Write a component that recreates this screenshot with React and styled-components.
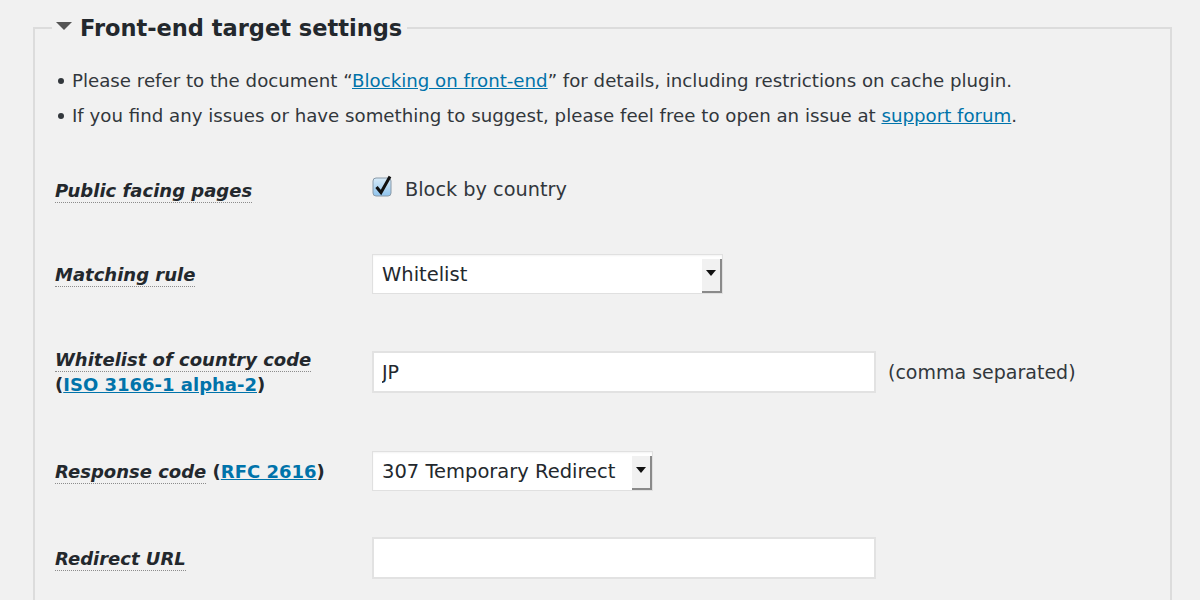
import React from "react";
import styled, { createGlobalStyle } from "styled-components";

const GlobalStyle = createGlobalStyle`
  html, body {
    margin: 0;
    background: #f1f1f1;
  }
  body {
    font-family: "DejaVu Sans", "Liberation Sans", sans-serif;
    color: #32373c;
  }
`;

const rows = [
  { key: "public", h: 80 },
  { key: "rule", h: 88 },
  { key: "whitelist", h: 108 },
  { key: "code", h: 90 },
  { key: "redirect", h: 84 }
];

const Caret = () => (
  <svg width="16" height="8" viewBox="0 0 16 8">
    <path d="M0 0 L16 0 L8 8 Z" fill="#555" />
  </svg>
);

const CheckMark = () => (
  <svg width="21" height="22" viewBox="0 0 21 22">
    <defs>
      <linearGradient id="cb" x1="0" y1="0" x2="0" y2="1">
        <stop offset="0" stopColor="#d7ebf9" />
        <stop offset="1" stopColor="#8fc3ec" />
      </linearGradient>
    </defs>
    <rect x="1" y="3" width="18" height="18" rx="3" fill="url(#cb)" stroke="#8a9aa8" />
    <path d="M4.5 12 L9 17.5 L18 1.5" fill="none" stroke="#111" strokeWidth="3" strokeLinejoin="miter" />
  </svg>
);

const SelectBox = ({ width, children }) => (
  <Select width={width}>
    <SelectValue>{children}</SelectValue>
    <SelectArrow>
      <svg width="10" height="6" viewBox="0 0 10 6">
        <path d="M0 0 L10 0 L5 6 Z" fill="#111" />
      </svg>
    </SelectArrow>
  </Select>
);

export default function App() {
  const heights = Object.fromEntries(rows.map(r => [r.key, r.h]));
  return (
    <>
      <GlobalStyle />
      <Page>
        <Fieldset>
          <Legend>
            <Caret />
            Front-end target settings
          </Legend>
          <Notes>
            <li>
              Please refer to the document “<Link href="#">Blocking on front-end</Link>” for details,
              including restrictions on cache plugin.
            </li>
            <li>
              If you find any issues or have something to suggest, please feel free to open an
              issue at <Link href="#">support forum</Link>.
            </li>
          </Notes>

          <Row h={heights.public}>
            <Label>
              <Term>Public facing pages</Term>
            </Label>
            <Field>
              <CheckLabel>
                <CheckMark />
                Block by country
              </CheckLabel>
            </Field>
          </Row>

          <Row h={heights.rule}>
            <Label>
              <Term>Matching rule</Term>
            </Label>
            <Field>
              <SelectBox width={351}>Whitelist</SelectBox>
            </Field>
          </Row>

          <Row h={heights.whitelist}>
            <Label>
              <Term>Whitelist of country code</Term>
              <br />
              (<BoldLink href="#">ISO 3166-1 alpha-2</BoldLink>)
            </Label>
            <Field>
              <TextInput defaultValue="JP" />
              <Hint>(comma separated)</Hint>
            </Field>
          </Row>

          <Row h={heights.code}>
            <Label>
              <Term>Response code</Term> (<BoldLink href="#">RFC 2616</BoldLink>)
            </Label>
            <Field>
              <SelectBox width={281}>307 Temporary Redirect</SelectBox>
            </Field>
          </Row>

          <Row h={heights.redirect}>
            <Label>
              <Term>Redirect URL</Term>
            </Label>
            <Field>
              <TextInput defaultValue="" />
            </Field>
          </Row>
        </Fieldset>
      </Page>
    </>
  );
}

const Page = styled.div`
  padding: 11px 28px 0 33px;
  height: 589px;
  overflow: hidden;
`;

const Fieldset = styled.fieldset`
  margin: 0;
  padding: 0 20px 40px;
  border: 2px solid #dcdcdc;
  min-height: 700px;
`;

const Legend = styled.legend`
  margin-left: -3px;
  padding: 0 5px 0 4px;
  font-size: 22.5px;
  font-weight: bold;
  line-height: 34px;
  color: #23282d;
  display: flex;
  align-items: center;
  gap: 8px;

  svg {
    margin-top: -4px;
  }
`;

const Notes = styled.ul`
  margin: 18px 0 0;
  padding: 0 0 0 17px;
  font-size: 18.2px;
  line-height: 35px;
  color: #32373c;

  li {
    list-style: none;
    position: relative;
  }

  li::before {
    content: "";
    position: absolute;
    left: -14px;
    top: 15px;
    width: 6px;
    height: 6px;
    border-radius: 50%;
    background: #32373c;
  }
`;

const Link = styled.a`
  color: #0073aa;
  text-decoration: underline;
`;

const BoldLink = styled(Link)`
  font-weight: bold;
`;

const Row = styled.div`
  height: ${p => p.h}px;
  display: flex;
  align-items: center;
  &:first-of-type {
    margin-top: 17px;
  }
`;

const Label = styled.div`
  width: 317px;
  flex: none;
  font-size: 18px;
  font-weight: bold;
  line-height: 25px;
  color: #23282d;
`;

const Term = styled.span`
  font-style: italic;
  border-bottom: 1px dotted #8c8c8c;
  padding-bottom: 1px;
`;

const Field = styled.div`
  display: flex;
  align-items: center;
  gap: 12px;
  font-size: 19px;
`;

const CheckLabel = styled.label`
  display: flex;
  align-items: center;
  gap: 12px;
  margin-top: -2px;
  font-size: 19.3px;
  color: #32373c;

  svg {
    margin-top: -6px;
  }
`;

const Select = styled.div`
  width: ${p => p.width}px;
  height: 40px;
  box-sizing: border-box;
  display: flex;
  background: #fff;
  border: 1px solid #e0e0e0;
  box-shadow: inset 0 1px 2px rgba(0, 0, 0, 0.05);
`;

const SelectValue = styled.div`
  flex: 1;
  padding: 0 9px;
  display: flex;
  align-items: center;
  font-size: 19.5px;
  color: #23282d;
  white-space: nowrap;
`;

const SelectArrow = styled.div`
  width: 20px;
  margin: 4px 0 0;
  box-sizing: border-box;
  background: #f1f1f1;
  border-right: 2px solid #8a8a8a;
  border-bottom: 2px solid #8a8a8a;
  display: flex;
  align-items: center;
  justify-content: center;
  padding-bottom: 4px;
`;

const TextInput = styled.input`
  width: 504px;
  height: 42px;
  box-sizing: border-box;
  border: 2px solid #e2e2e2;
  background: #fff;
  padding: 0 8px;
  font-family: inherit;
  font-size: 19px;
  color: #23282d;
  outline: none;
`;

const Hint = styled.span`
  font-size: 19px;
  color: #32373c;
`;
